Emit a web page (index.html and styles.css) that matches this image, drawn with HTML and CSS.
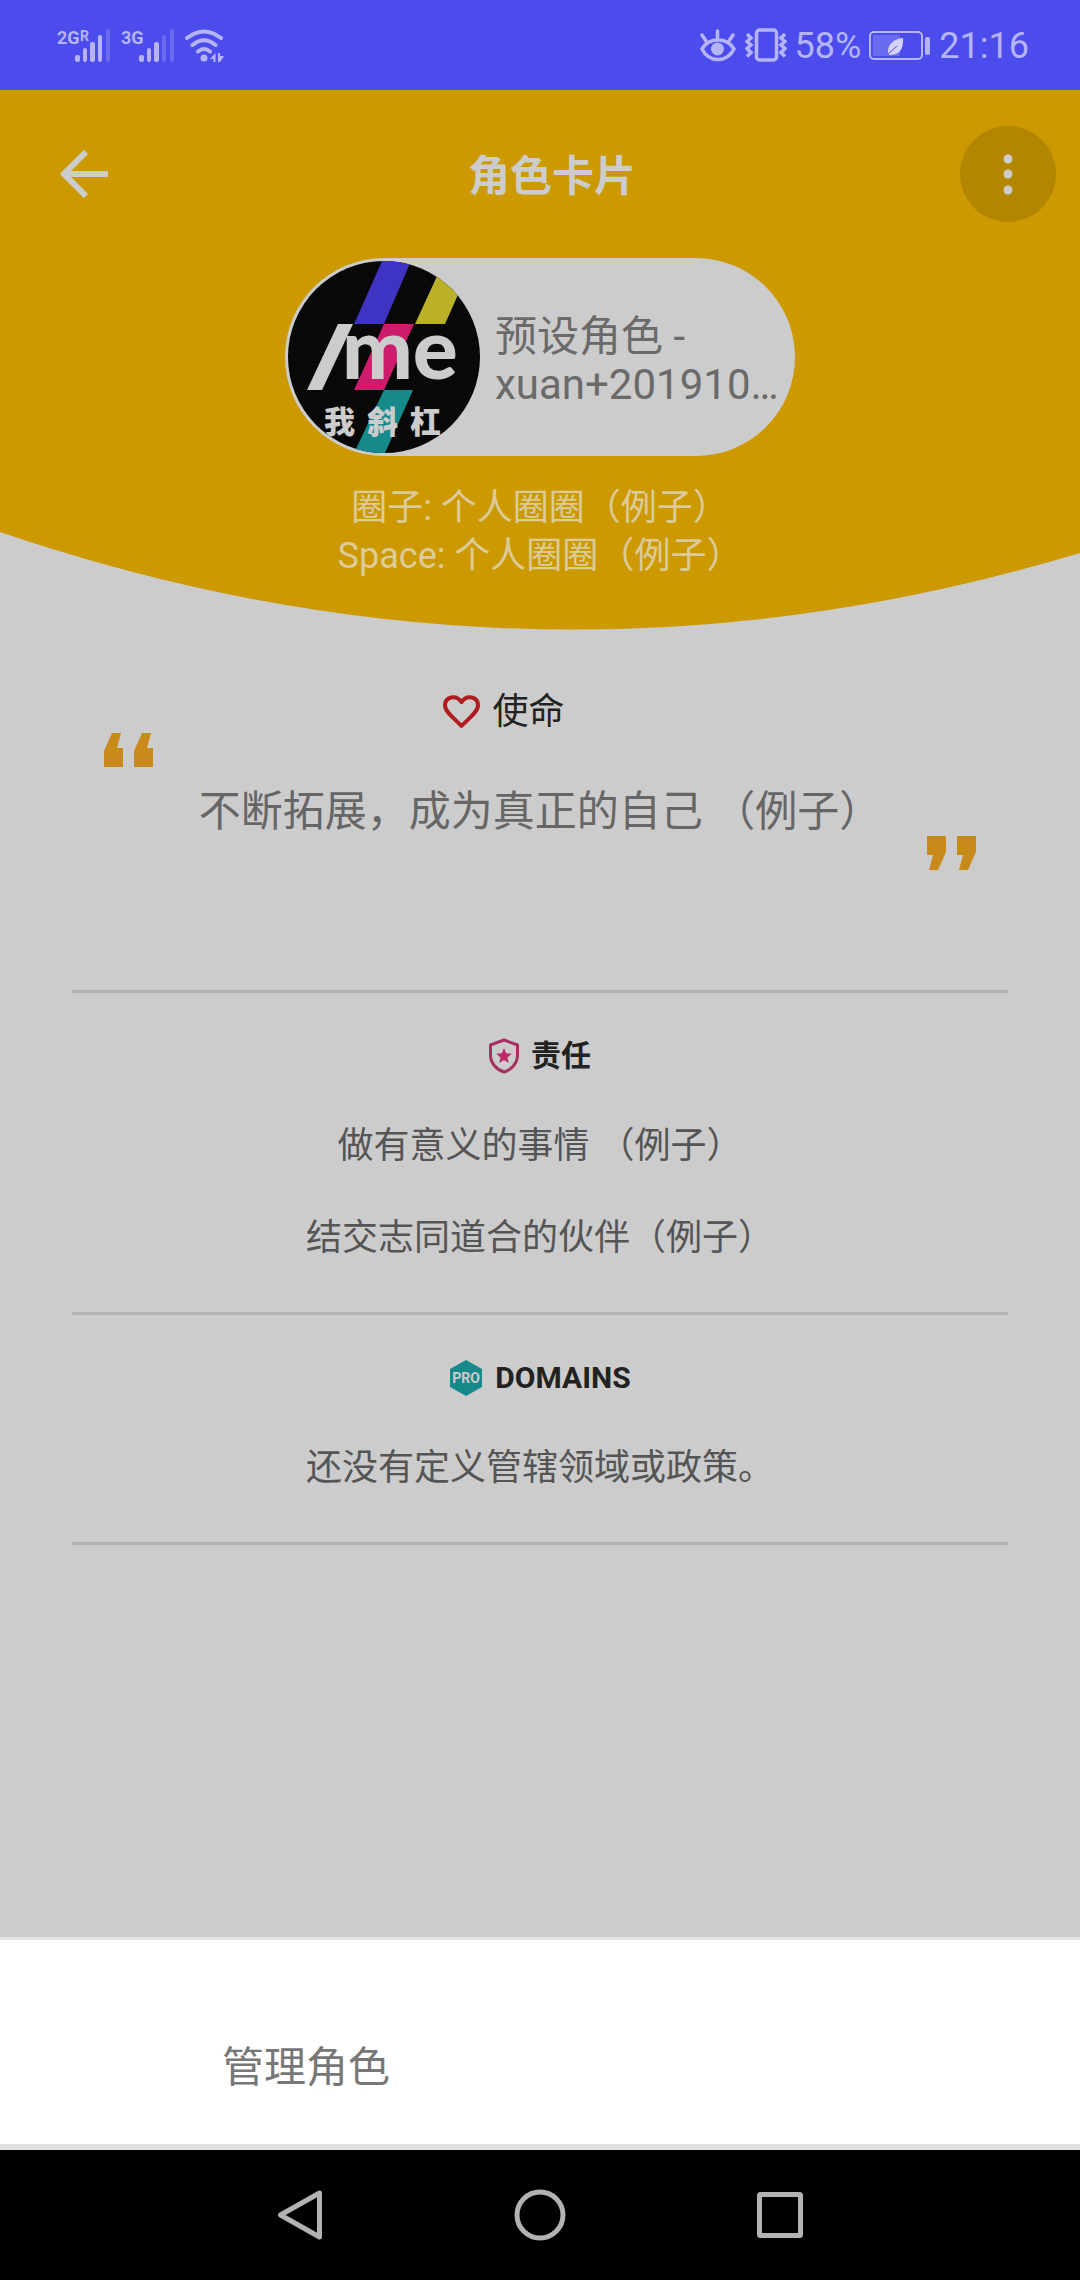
FILE: index.html
```html
<!DOCTYPE html>
<html lang="zh-CN">
<head>
<meta charset="utf-8">
<meta name="viewport" content="width=device-width, initial-scale=1">
<title>角色卡片</title>
<link rel="stylesheet" href="styles.css">
</head>
<body>
<div class="status">
  <div class="status-group">
    <svg class="signal" width="54" height="36" viewBox="0 0 54 36" role="img" aria-label="2G R">
      <text class="signal-label" x="0" y="17">2G</text>
      <text class="signal-roaming" x="23" y="14">R</text>
      <g fill="currentColor">
        <rect x="18" y="28" width="5" height="7" rx="2"/><rect x="26" y="21" width="4" height="14" rx="2"/>
        <rect x="33" y="15" width="5" height="20" rx="2"/><rect x="41" y="8" width="4" height="27" rx="2"/>
        <rect x="49" y="2" width="4" height="33" rx="2" opacity=".3"/>
      </g>
    </svg>
    <svg class="signal" width="54" height="36" viewBox="0 0 54 36" role="img" aria-label="3G">
      <text class="signal-label" x="0" y="17">3G</text>
      <g fill="currentColor">
        <rect x="18" y="28" width="5" height="7" rx="2"/><rect x="26" y="21" width="4" height="14" rx="2"/>
        <rect x="33" y="15" width="5" height="20" rx="2"/>
        <rect x="41" y="8" width="4" height="27" rx="2" opacity=".3"/><rect x="49" y="2" width="4" height="33" rx="2" opacity=".3"/>
      </g>
    </svg>
    <svg width="40" height="36" viewBox="0 0 40 36" aria-hidden="true">
      <g fill="none" stroke="currentColor" stroke-width="4" stroke-linecap="round">
        <path d="M2 11Q19 -2 36 11M7.500 18Q19 8.500 30.500 18M13 24.500Q19 19.500 25 24.500"/>
      </g>
      <g fill="currentColor"><circle cx="19" cy="31" r="3.500"/><path d="M30.500 26V35H28.500V32H25ZM33 26H35V29H39L35 35H33Z"/></g>
    </svg>
  </div>
  <div class="status-group status-right">
    <svg width="38" height="36" viewBox="0 0 38 36" aria-hidden="true">
      <path fill="none" stroke="currentColor" stroke-width="3.500" stroke-linecap="round" d="M3 21C10 9 28 9 35 21C28 35 10 35 3 21ZM18.500 11V3M7 13L3 7M30 13L34 7"/>
      <circle cx="18.500" cy="21" r="6.500" fill="currentColor"/>
    </svg>
    <svg class="vibrate" width="42" height="36" viewBox="0 0 42 36" aria-hidden="true">
      <g fill="none" stroke="currentColor" stroke-width="3.500">
        <rect x="11.500" y="2" width="20" height="30" rx="3"/>
        <path d="M2 6l4 4-4 3.500 4 3.500-4 3.500 4 4-4 4M40 6l-4 4 4 3.500-4 3.500 4 3.500-4 4 4 4"/>
      </g>
    </svg>
    <span>58%</span>
    <svg class="battery" width="62" height="36" viewBox="0 0 62 36" aria-hidden="true">
      <rect x="1" y="4" width="52" height="27" rx="4" fill="none" stroke="currentColor" stroke-width="2"/>
      <rect x="4" y="7" width="27" height="21" fill="currentColor" opacity=".3"/>
      <rect x="56" y="9" width="5" height="18" rx="2" fill="currentColor"/>
      <path d="M34 10C25 11 18 16 19 26L21 27C30 27 35 21 34 10Z" fill="#d3d2fc"/>
      <path d="M19 26L28 18" stroke="#4b4ceb" stroke-width="1"/>
    </svg>
    <time>21:16</time>
  </div>
</div>

<header class="hero">
  <svg class="hero-shape" viewBox="0 0 1080 540" preserveAspectRatio="none" aria-hidden="true">
    <path fill="#cc9900" d="M0 0H1080V463Q540 626 0 442Z"/>
  </svg>
  <div class="toolbar">
    <button class="back" type="button" aria-label="返回">
      <svg width="48" height="48" viewBox="0 0 48 48"><path fill="none" stroke="#cccccc" stroke-width="6" d="M26 2L4 24L26 46M4 24H48"/></svg>
    </button>
    <h1 class="title">角色卡片</h1>
    <button class="more" type="button" aria-label="更多">
      <svg width="48" height="48" viewBox="0 0 48 48" fill="#cccccc"><circle cx="24" cy="9" r="4.500"/><circle cx="24" cy="24" r="4.500"/><circle cx="24" cy="40" r="4.500"/></svg>
    </button>
  </div>
  <div class="role">
    <svg class="avatar" width="192" height="192" viewBox="0 0 192 192" role="img" aria-label="我斜杠">
      <rect width="192" height="192" fill="#080808"/>
      <path fill="#3e33c2" d="M94 0H123L96 63H66Z"/>
      <path fill="#bab128" d="M156 0H185L157 63H127Z"/>
      <path fill="#cc1c6b" d="M96 63H126L96 129H66Z"/>
      <path fill="#16898a" d="M96 129H125L97 192H66Z"/>
      <path fill="#cccccc" d="M50 63H65L34 129H19Z"/>
      <text class="avatar-me" x="54" y="118">me</text>
      <text class="avatar-name" x="36 79 122" y="172">我斜杠</text>
    </svg>
    <p class="role-name">预设角色 -<br>xuan+201910…</p>
  </div>
  <div class="circles">
    <p>圈子: 个人圈圈<span class="sample" lang="zh-TW">（例子）</span></p>
    <p>Space: 个人圈圈<span class="sample" lang="zh-TW">（例子）</span></p>
  </div>
</header>

<main class="content">
  <section class="section mission">
    <h2 class="heading mission-heading">
      <svg width="37" height="34" viewBox="0 0 37 34" aria-hidden="true"><path fill="none" stroke="#b01c20" stroke-width="4" stroke-linejoin="round" d="M18.500 31C12 24 2 17 2 10.500C2 2 13 -1 18.500 7C24 -1 35 2 35 10.500C35 17 25 24 18.500 31Z"/></svg>
      使命
    </h2>
    <div class="quote">
      <svg width="49" height="34" viewBox="0 0 49 34" aria-hidden="true"><path id="mark" fill="#c88a1a" d="M8 0H17L13 15H19V34H0V18ZM38 0H47L43 15H49V34H30V18Z"/></svg>
      <blockquote>不断拓展，成为真正的自己 <span class="sample" lang="zh-TW">（例子）</span></blockquote>
      <svg class="quote-end" width="49" height="34" viewBox="0 0 49 34" aria-hidden="true"><use href="#mark" transform="rotate(180 24.500 17)"/></svg>
    </div>
  </section>
  <section class="section">
    <h2 class="heading strong">
      <svg width="30" height="36" viewBox="0 0 30 36" aria-hidden="true"><path fill="none" stroke="#a83060" stroke-width="3" stroke-linejoin="round" d="M15 2L28.500 7V17C28.500 25 23 31.500 15 34C7 31.500 1.500 25 1.500 17V7Z"/><path fill="#c02868" d="M15 10l2.200 5.200 5.600 .5-4.300 3.700 1.300 5.500L15 22l-4.800 2.900 1.300-5.500L7.200 15.700l5.600-.5z"/></svg>
      责任
    </h2>
    <p>做有意义的事情 <span class="sample" lang="zh-TW">（例子）</span></p>
    <p>结交志同道合的伙伴<span class="sample" lang="zh-TW">（例子）</span></p>
  </section>
  <section class="section">
    <h2 class="heading strong">
      <svg width="34" height="36" viewBox="0 0 34 36" aria-hidden="true"><path fill="#16898a" stroke="#16898a" stroke-width="2" stroke-linejoin="round" d="M17 1L32 9.500V26.500L17 35L2 26.500V9.500Z"/><text class="pro" x="17" y="23" text-anchor="middle">PRO</text></svg>
      DOMAINS
    </h2>
    <p>还没有定义管辖领域或政策。</p>
  </section>
</main>

<div class="sheet">
  <button class="sheet-item" type="button">管理角色</button>
</div>

<nav class="nav">
  <button type="button" aria-label="返回"><svg width="50" height="50" viewBox="0 0 50 50"><path d="M44.500 3V47L5.500 25Z"/></svg></button>
  <button type="button" aria-label="主屏幕"><svg width="52" height="52" viewBox="0 0 52 52"><circle cx="26" cy="26" r="23"/></svg></button>
  <button type="button" aria-label="最近任务"><svg width="50" height="50" viewBox="0 0 50 50"><rect x="4.500" y="4.500" width="41" height="41" rx="1"/></svg></button>
</nav>
</body>
</html>
```
FILE: styles.css
```css
* { box-sizing: border-box; }

body {
  margin: 0;
  min-height: 100vh;
  display: flex;
  flex-direction: column;
  background: #cccccc;
  color: #555555;
  font-family: Roboto, "Noto Sans CJK SC", sans-serif;
  font-size: 36px;
  line-height: 48px;
}

h1, h2, p, blockquote { margin: 0; }
svg { display: block; flex: none; }
button {
  border: 0;
  padding: 0;
  background: none;
  font: inherit;
  color: inherit;
  cursor: pointer;
}

.status {
  display: flex;
  justify-content: space-between;
  align-items: center;
  height: 90px;
  padding: 0 51px 0 57px;
  background: #4b4ceb;
  color: #b5b4f9;
}
.status-group { display: flex; align-items: center; gap: 10px; }
.status-right { gap: 8px; padding-top: 2px; }
.signal-label, .signal-roaming {
  font-family: "Liberation Sans Narrow", Roboto, sans-serif;
  font-weight: 700;
  font-size: 18px;
  fill: currentColor;
}
.signal-roaming { font-size: 14px; }

.hero {
  position: relative;
  padding: 36px 0 50px;
  display: flex;
  flex-direction: column;
  align-items: center;
}
.hero-shape { position: absolute; inset: 0; width: 100%; height: 100%; z-index: -1; }
.toolbar {
  align-self: stretch;
  display: flex;
  align-items: center;
  padding: 0 24px;
}
.back, .more { display: flex; align-items: center; justify-content: center; height: 96px; }
.back { width: 120px; }
.more { width: 96px; border-radius: 50%; background: #b38600; }
.title {
  flex: 1;
  padding-top: 6px;
  text-align: center;
  font-size: 42px;
  font-weight: 700;
  color: #cccccc;
}

.role {
  display: flex;
  align-items: center;
  gap: 15px;
  margin-top: 36px;
  width: 510px;
  padding: 3px;
  border-radius: 99px;
  background: #cccccc;
}
.avatar { border-radius: 50%; }
.avatar-me { font-family: Lato, sans-serif; font-weight: 900; font-size: 84px; fill: #cccccc; }
.avatar-name { font-family: "Noto Sans CJK SC", sans-serif; font-weight: 900; font-size: 31px; fill: #cccccc; }
.role-name {
  padding-top: 8px;
  font-size: 42px;
  white-space: nowrap;
  color: #6a6a6a;
}
.circles { margin-top: 28px; text-align: center; color: #dccb98; }
/* Full-width brackets centred in their cells */
.sample { font-family: Roboto, "Noto Sans CJK TC", sans-serif; }

.content { flex: 1; padding-top: 61px; }
.section {
  margin: 0 72px;
  padding: 42px 0 50px;
  border-bottom: 3px solid #b2b2b2;
  text-align: center;
}
.section p { margin-top: 45px; }
.section p + p { margin-top: 44px; }
.mission { padding: 0 0 120px; }
.heading {
  display: flex;
  justify-content: center;
  align-items: center;
  gap: 12px;
  font-size: 36px;
  font-weight: 400;
  line-height: 42px;
  color: #222222;
}
.mission-heading { padding-right: 72px; }
.strong { font-size: 30px; font-weight: 700; }
.quote {
  display: flex;
  justify-content: space-between;
  padding: 0 32px;
}
.quote blockquote {
  padding: 49px 0 28px;
  font-size: 42px;
  line-height: 60px;
  color: #666666;
}
.quote-end { align-self: flex-end; }
.pro { font-family: Roboto, sans-serif; font-weight: 700; font-size: 14px; fill: #cccccc; }

.sheet {
  background: #ffffff;
  border-top: 3px solid #e4e4e4;
  border-bottom: 6px solid #e2e2e2;
  padding: 56px 0 4px;
}
.sheet-item {
  display: block;
  width: 100%;
  height: 144px;
  padding-left: 222px;
  text-align: left;
  font-size: 42px;
  color: #777777;
}

.nav {
  display: flex;
  justify-content: center;
  height: 130px;
  background: #000000;
}
.nav button { width: 240px; display: flex; align-items: center; justify-content: center; }
.nav svg { fill: none; stroke: #b3b3b3; stroke-width: 5; stroke-linejoin: round; }
```
